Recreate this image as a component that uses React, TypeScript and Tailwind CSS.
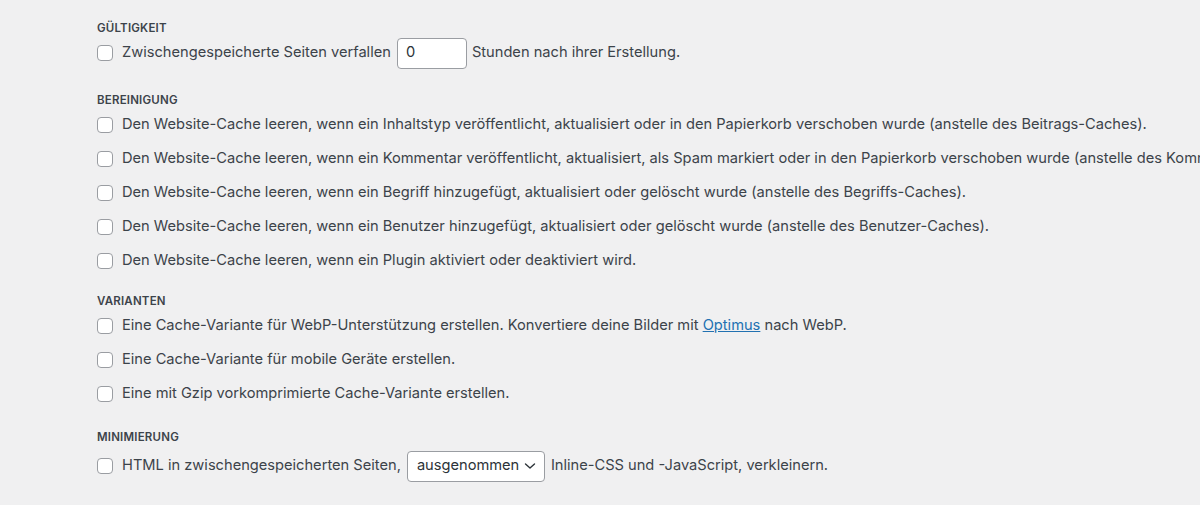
import React from "react";

const font = { fontFamily: "Inter, 'Noto Sans', sans-serif" };

function Box() {
  return <span className="inline-block w-4 h-4 shrink-0 rounded-[4px] border border-[#9a9da2] bg-white mr-[9px]" />;
}

function Heading({ children }: { children: React.ReactNode }) {
  return <div className="h-4 leading-4 text-[11.5px] font-semibold uppercase text-[#3c434a] tracking-[0.2px]">{children}</div>;
}

function Row({ children, h = "h-[34px]" }: { children: React.ReactNode; h?: string }) {
  return (
    <div className={`${h} flex items-center whitespace-nowrap`}>
      <Box />
      <span className="flex items-center">{children}</span>
    </div>
  );
}

export default function App() {
  return (
    <div className="w-[1200px] h-[505px] overflow-hidden bg-[#f0f0f1] text-[#3c434a] text-[14.65px] pl-[97px] pt-5" style={font}>
      <Heading>Gültigkeit</Heading>
      <Row>
        Zwischengespeicherte Seiten verfallen
        <span className="inline-flex items-center ml-[6px] mr-[5px] w-[70px] h-[31px] bg-white border border-[#9a9da2] rounded-[4px] px-2 text-[#2c3338]">0</span>
        Stunden nach ihrer Erstellung.
      </Row>

      <div className="mt-[22px]">
        <Heading>Bereinigung</Heading>
        <Row>Den Website-Cache leeren, wenn ein Inhaltstyp veröffentlicht, aktualisiert oder in den Papierkorb verschoben wurde (anstelle des Beitrags-Caches).</Row>
        <Row>Den Website-Cache leeren, wenn ein Kommentar veröffentlicht, aktualisiert, als Spam markiert oder in den Papierkorb verschoben wurde (anstelle des Kommentar-Caches).</Row>
        <Row>Den Website-Cache leeren, wenn ein Begriff hinzugefügt, aktualisiert oder gelöscht wurde (anstelle des Begriffs-Caches).</Row>
        <Row>Den Website-Cache leeren, wenn ein Benutzer hinzugefügt, aktualisiert oder gelöscht wurde (anstelle des Benutzer-Caches).</Row>
        <Row>Den Website-Cache leeren, wenn ein Plugin aktiviert oder deaktiviert wird.</Row>
      </div>

      <div className="mt-[15px]">
        <Heading>Varianten</Heading>
        <Row>
          Eine Cache-Variante für WebP-Unterstützung erstellen. Konvertiere deine Bilder mit&nbsp;
          <a className="text-[#2271b1] underline">Optimus</a>
          &nbsp;nach WebP.
        </Row>
        <Row>Eine Cache-Variante für mobile Geräte erstellen.</Row>
        <Row>Eine mit Gzip vorkomprimierte Cache-Variante erstellen.</Row>
      </div>

      <div className="mt-[18px]">
        <Heading>Minimierung</Heading>
        <Row h="h-[42px]">
          HTML in zwischengespeicherten Seiten,
          <span className="inline-flex items-center justify-between ml-[6px] mr-[6px] w-[138px] h-[31px] bg-white border border-[#9a9da2] rounded-[4px] pl-[9px] pr-[7px] text-[#2c3338]">
            ausgenommen
            <svg width="14" height="14" viewBox="0 0 14 14" fill="none" stroke="#2c3338" strokeWidth="1.4" strokeLinecap="round" strokeLinejoin="round">
              <path d="M2.5 5 L7 9 L11.5 5" />
            </svg>
          </span>
          Inline-CSS und -JavaScript, verkleinern.
        </Row>
      </div>
    </div>
  );
}
